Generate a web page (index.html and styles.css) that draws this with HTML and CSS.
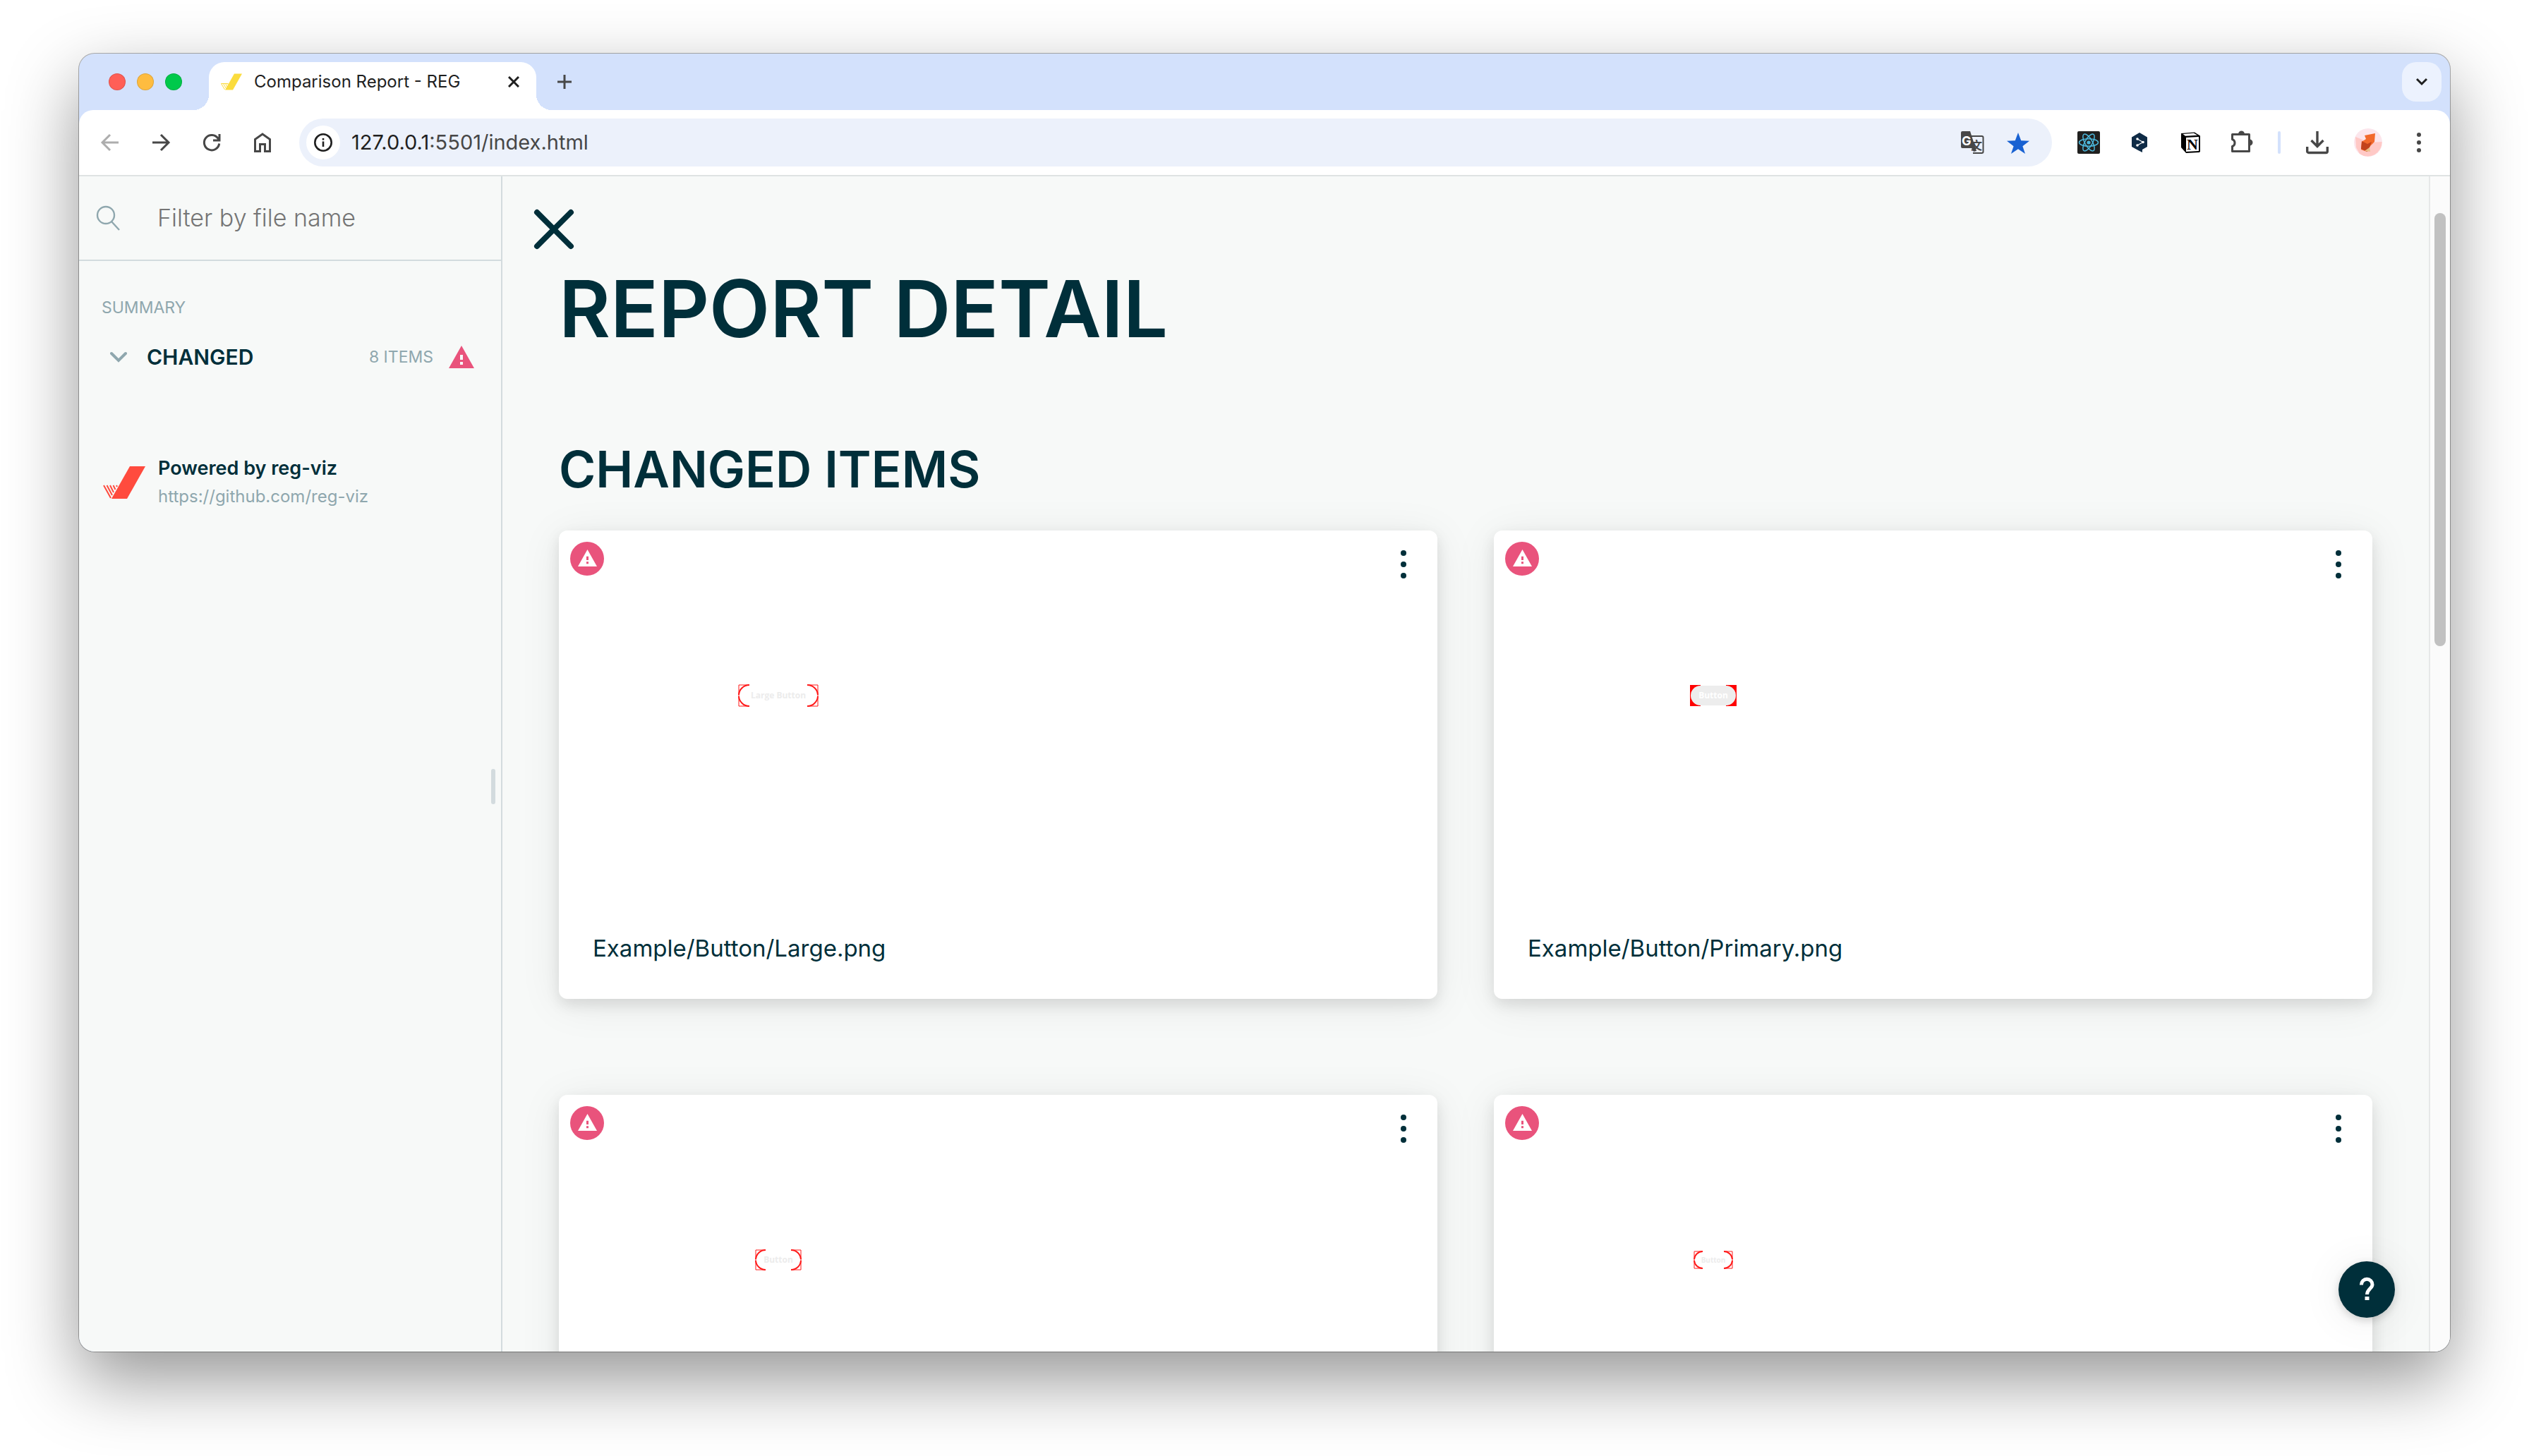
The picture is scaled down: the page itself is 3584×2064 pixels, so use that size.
FILE: index.html
```html
<!DOCTYPE html>
<html lang="en">
<head>
<meta charset="utf-8">
<title>Comparison Report - REG</title>
<link rel="stylesheet" href="styles.css">
</head>
<body>
<svg class="defs" aria-hidden="true">
  <symbol id="warning" viewBox="0 0 36 32"><path fill-rule="evenodd" d="M18 0 36 32H0ZM16 13v7h4v-7ZM16 23v4h4v-4Z"/></symbol>
  <symbol id="kebab" viewBox="0 0 12 42"><circle cx="6" cy="5" r="4"/><circle cx="6" cy="21" r="4"/><circle cx="6" cy="37" r="4"/></symbol>
</svg>
<div class="window">
  <header class="tabstrip">
    <div class="lights">
      <span class="light light-close"></span><span class="light light-min"></span><span class="light light-max"></span>
    </div>
    <div class="tab">
      <svg class="favicon" viewBox="0 0 60 48"><path fill="#fbdc3d" d="M38 1h22L34 47H12Z"/><path fill="none" stroke="#fbdc3d" stroke-width="2" d="M1 29l10 17M7 29l8 14M13 29l5 9M19 29l2 4M1 29h20"/></svg>
      <span class="tab-title">Comparison Report - REG</span>
      <button class="plain" aria-label="Close tab"><svg width="16" height="16" viewBox="0 0 16 16"><path d="M1 1l14 14M15 1L1 15" stroke="#1f1f1f" stroke-width="3"/></svg></button>
    </div>
    <button class="plain new-tab" aria-label="New tab"><svg width="20" height="20" viewBox="0 0 20 20"><path d="M10 0v20M0 10h20" stroke="#474747" stroke-width="3"/></svg></button>
    <button class="tab-search" aria-label="Search tabs"><svg width="16" height="12" viewBox="0 0 16 12"><path d="M1 2l7 7 7-7" fill="none" stroke="#1f1f1f" stroke-width="3"/></svg></button>
  </header>
  <nav class="toolbar">
    <button class="tool" aria-label="Back"><svg viewBox="0 0 36 36"><path class="line muted" d="M30 18H8M18 7L7 18l11 11"/></svg></button>
    <button class="tool" aria-label="Forward"><svg viewBox="0 0 36 36"><path class="line" d="M6 18h22M18 7l11 11-11 11"/></svg></button>
    <button class="tool" aria-label="Reload"><svg viewBox="0 0 36 36"><path class="line" d="M28.700 19.500A10.700 10.700 0 1 1 27 12.200L28 14M29 6v9h-9"/></svg></button>
    <button class="tool" aria-label="Home"><svg viewBox="0 0 36 36"><path class="line" d="M7.500 30.500V13.500L18 6l10.500 7.500v17h-7V20.500h-7v10Z"/></svg></button>
    <div class="omnibox">
      <button class="site-info" aria-label="Site information"><svg width="28" height="28" viewBox="0 0 28 28"><circle cx="14" cy="14" r="11.700" fill="none" stroke="#1f1f1f" stroke-width="2.600"/><path d="M14 12.500v7.500M14 8v2.600" stroke="#1f1f1f" stroke-width="2.600"/></svg></button>
      <div class="url"><span class="host">127.0.0.1</span>:5501/index.html</div>
      <button class="mark" aria-label="Translate"><svg viewBox="0 0 36 36"><path d="M14 9h16.500a2 2 0 0 1 2 2v20a2 2 0 0 1-2 2H18" fill="none" stroke="#474747" stroke-width="2"/><text class="cjk" x="15" y="28">文</text><path fill="#474747" d="M3 2h11l9 28-4 1-3-5H3a2 2 0 0 1-2-2V4a2 2 0 0 1 2-2Z"/><text class="gee" x="2" y="22">G</text></svg></button>
      <button class="mark" aria-label="Bookmark"><svg viewBox="0 0 36 36"><path fill="#1861d2" d="M18 4l4.200 11.200L34 15.700l-9.600 7.600L28 34l-10-6.800L8 34l3.600-10.700L2 15.700l11.800-.5Z"/></svg></button>
    </div>
    <button class="tool" aria-label="React Developer Tools"><svg viewBox="0 0 36 36"><rect x="2" y="2" width="32" height="32" rx="2" fill="#20201f"/><g fill="none" stroke="#4cb8dc" stroke-width="1.500"><ellipse cx="18" cy="18" rx="13.500" ry="5.200"/><ellipse cx="18" cy="18" rx="13.500" ry="5.200" transform="rotate(60 18 18)"/><ellipse cx="18" cy="18" rx="13.500" ry="5.200" transform="rotate(120 18 18)"/></g><circle cx="18" cy="18" r="2.600" fill="#4cb8dc"/></svg></button>
    <button class="tool" aria-label="DeepL"><svg viewBox="0 0 36 36"><path fill="#0f2b46" d="M18 4l11 6.500v13.500l-7 4v4l-6-3-9-5V10.500Z"/><path d="M15 13l8 4.500-8 4.500" fill="none" stroke="#fff" stroke-width="1.200"/><g fill="#fff"><circle cx="15" cy="13" r="1.800"/><circle cx="23" cy="17.500" r="1.800"/><circle cx="15" cy="22" r="1.800"/></g></svg></button>
    <button class="tool" aria-label="Notion"><svg viewBox="0 0 36 36"><path d="M5 5l19-1.500 8 5v22l-1 1.500-19 1-7-8Z"/><path fill="#fff" d="M7.500 6l15.500-1.200 5 3-17 1ZM12 11l18-1v20l-18 1Z"/><text class="notion" x="13" y="28">N</text></svg></button>
    <button class="tool" aria-label="Extensions"><svg viewBox="0 0 36 36"><path fill="none" stroke="#474747" stroke-width="3" stroke-linejoin="round" d="M5.500 6.500h24v24h-24v-7a5.300 5.300 0 0 0 0-10Z"/><path fill="#474747" d="M14 6a4.500 4.500 0 0 1 9 0ZM30 13.500a4.500 4.500 0 0 1 0 9Z"/></svg></button>
    <span class="tool-divider"></span>
    <button class="tool" aria-label="Downloads"><svg viewBox="0 0 36 36"><path fill="none" stroke="#474747" stroke-width="3.400" d="M18 2v21M9.500 15l8.500 8.500 8.500-8.500M3.700 24v6.500a2 2 0 0 0 2 2h24.600a2 2 0 0 0 2-2V24"/></svg></button>
    <button class="tool" aria-label="Profile"><svg class="avatar" viewBox="0 0 40 40"><circle cx="20" cy="20" r="20" fill="#fce6ec"/><path fill="#ffc9c6" d="M2 12l20 8 17.500-1A20 20 0 0 1 8 36L3 27Z"/><path fill="#f26a2c" d="M15 10l15-3-1 12-6 6-5 8-8-3 1-11 6-4Z"/><path fill="#c2431c" d="M11 18l8 4 6-3-3 8-3 6-9-4Z"/><path fill="#e8c08a" d="M15 32l7-5 1 6Z"/></svg></button>
    <button class="tool" aria-label="Menu"><svg viewBox="0 0 36 36" fill="#474747"><circle cx="18" cy="7" r="3"/><circle cx="18" cy="18" r="3"/><circle cx="18" cy="29" r="3"/></svg></button>
  </nav>
  <div class="page">
    <aside class="sidebar">
      <label class="filter">
        <svg width="36" height="36" viewBox="0 0 36 36"><g fill="none" stroke="#8fa7ae" stroke-width="2.400"><circle cx="15" cy="14" r="12"/><path d="M23 23l11 12"/></g></svg>
        <input type="text" placeholder="Filter by file name" aria-label="Filter by file name">
      </label>
      <p class="summary-title">SUMMARY</p>
      <button class="group">
        <svg width="24" height="16" viewBox="0 0 24 16"><path d="M2 3l10 10L22 3" fill="none" stroke="#8fa7ae" stroke-width="4" stroke-linecap="round"/></svg>
        <span class="group-name">CHANGED</span>
        <span class="group-count">8 ITEMS</span>
        <svg class="pink" width="36" height="32"><use href="#warning"/></svg>
      </button>
      <a class="powered" href="https://github.com/reg-viz">
        <svg width="60" height="48" viewBox="0 0 60 48"><path fill="#ff4b3e" d="M38 1h22L34 47H12Z"/><path fill="none" stroke="#ff4b3e" stroke-width="2" d="M1 28l10 18M5.500 28l7.500 14M10 28l5 10M14.500 28l3 6M19 28l1 2"/></svg>
        <span class="powered-text"><strong>Powered by reg-viz</strong><span>https://github.com/reg-viz</span></span>
      </a>
      <span class="resizer"></span>
    </aside>
    <main class="content">
      <button class="plain close" aria-label="Close menu"><svg width="58" height="58" viewBox="0 0 58 58"><path d="M5 5l48 48M53 5L5 53" stroke="#002f3a" stroke-width="8" stroke-linecap="round"/></svg></button>
      <h1>REPORT DETAIL</h1>
      <h2>CHANGED ITEMS</h2>
      <div class="cards">
        <article class="card">
          <span class="badge"><svg width="27" height="24"><use href="#warning"/></svg></span>
          <button class="plain card-menu" aria-label="Card menu"><svg width="12" height="42"><use href="#kebab"/></svg></button>
          <div class="preview"><svg width="114" height="32" viewBox="0 0 114 32"><path class="frame" d="M16 1H1v30h15M98 1h15v30H98"/><path class="diff" d="M16 1A15 15 0 0 0 1 15M1 17A15 15 0 0 0 16 31M98 1a15 15 0 0 1 15 14M113 17a15 15 0 0 1-15 14"/><text x="57" y="20">Large Button</text></svg></div>
          <p class="name">Example/Button/Large.png</p>
        </article>
        <article class="card">
          <span class="badge"><svg width="27" height="24"><use href="#warning"/></svg></span>
          <button class="plain card-menu" aria-label="Card menu"><svg width="12" height="42"><use href="#kebab"/></svg></button>
          <div class="preview"><svg width="66" height="30" viewBox="0 0 66 30"><path fill="#f00" d="M0 0h66v30H0Z"/><path fill="#fff" d="M15 0h36v30H15Z"/><rect x="1" y="1" width="64" height="28" rx="14" fill="#ededed"/><text class="light-text" x="33" y="19">Button</text></svg></div>
          <p class="name">Example/Button/Primary.png</p>
        </article>
        <article class="card">
          <span class="badge"><svg width="27" height="24"><use href="#warning"/></svg></span>
          <button class="plain card-menu" aria-label="Card menu"><svg width="12" height="42"><use href="#kebab"/></svg></button>
          <div class="preview"><svg width="66" height="30" viewBox="0 0 66 30"><path class="frame" d="M15 1H1v28h14M51 1h14v28H51"/><path class="diff" d="M15 1A14 14 0 0 0 1 14M1 16A14 14 0 0 0 15 29M51 1a14 14 0 0 1 14 13M65 16a14 14 0 0 1-14 13"/><text x="33" y="19">Button</text></svg></div>
        </article>
        <article class="card">
          <span class="badge"><svg width="27" height="24"><use href="#warning"/></svg></span>
          <button class="plain card-menu" aria-label="Card menu"><svg width="12" height="42"><use href="#kebab"/></svg></button>
          <div class="preview"><svg width="56" height="26" viewBox="0 0 56 26"><path class="frame" d="M13 1H1v24h12M43 1h12v24H43"/><path class="diff" d="M13 1A12 12 0 0 0 1 12M1 14A12 12 0 0 0 13 25M43 1a12 12 0 0 1 12 11M55 14a12 12 0 0 1-12 11"/><text class="small-text" x="28" y="17">Button</text></svg></div>
        </article>
      </div>
    </main>
    <div class="scrollbar"><span class="thumb"></span></div>
    <button class="help" aria-label="Help"><svg width="24" height="36" viewBox="0 0 24 36"><path d="M4.500 11.500V11a7.500 7.500 0 0 1 15.500 0c0 5.500-7.500 6.500-7.500 14" fill="none" stroke="#fff" stroke-width="5"/><path fill="#fff" d="M9.500 28h6v5h-6Z"/></svg></button>
  </div>
</div>
</body>
</html>
```
FILE: styles.css
```css
* { box-sizing: border-box; }

body {
  margin: 0;
  height: 100vh;
  padding: 76px 112px 148px;
  background: #fff;
  color: #002f3a;
  font-family: Inter, "Liberation Sans", sans-serif;
}

button { border: 0; padding: 0; margin: 0; background: none; font: inherit; color: inherit; }
svg { display: block; flex: none; }
p, h1, h2 { margin: 0; }
a { color: inherit; text-decoration: none; }
.defs { position: absolute; width: 0; height: 0; }
.plain { display: flex; }

/* Browser window */
.window {
  display: flex;
  flex-direction: column;
  height: 100%;
  border-radius: 22px;
  overflow: hidden;
  background: #d3e1fc;
  box-shadow: 0 0 0 1px rgba(0, 0, 0, .3), 0 40px 100px rgba(0, 0, 0, .42);
}

.tabstrip {
  display: flex;
  align-items: center;
  height: 80px;
  padding: 0 12px 0 42px;
}
.lights { display: flex; gap: 16px; width: 142px; }
.light { width: 24px; height: 24px; border-radius: 50%; border: 1px solid rgba(0, 0, 0, .12); }
.light-close { background: #ff5f57; }
.light-min { background: #febc40; }
.light-max { background: #00c94b; }

.tab {
  position: relative;
  display: flex;
  align-items: center;
  align-self: flex-end;
  width: 464px;
  height: 68px;
  padding: 0 24px 12px 17px;
  border-radius: 22px 22px 0 0;
  background: #fff;
}
.tab::before, .tab::after {
  content: "";
  position: absolute;
  bottom: 0;
  width: 22px;
  height: 22px;
  background: radial-gradient(circle at 0 0, transparent 22px, #fff 22px);
}
.tab::before { right: 100%; }
.tab::after { left: 100%; transform: scaleX(-1); }
.favicon { width: 30px; height: 24px; }
.tab-title { flex: 1; padding-left: 17px; font-size: 24px; line-height: 32px; color: #1f1f1f; }
.new-tab { margin-left: 30px; }
.tab-search {
  display: grid;
  place-items: center;
  width: 56px;
  height: 56px;
  margin-left: auto;
  border-radius: 20px;
  background: #ecf2fe;
}

.toolbar {
  display: flex;
  align-items: center;
  height: 94px;
  padding: 0 8px;
  border-bottom: 2px solid #dfe3e3;
  border-radius: 20px 20px 0 0;
  background: #fff;
}
.tool { display: grid; place-items: center; width: 72px; height: 72px; flex: none; }
.tool svg { width: 36px; height: 36px; }
.tool .avatar { width: 40px; height: 40px; }
.line { fill: none; stroke: #474747; stroke-width: 3; }
.muted { stroke: #adadad; }
.omnibox {
  display: flex;
  align-items: center;
  flex: 1;
  height: 68px;
  margin: 0 16px;
  padding: 0 16px 0 10px;
  border-radius: 34px;
  background: #ecf1fb;
}
.site-info { display: grid; place-items: center; width: 48px; height: 48px; border-radius: 50%; background: #fff; }
.url { flex: 1; padding-left: 16px; font-size: 29px; line-height: 36px; color: #474747; }
.host { color: #1f1f1f; }
.mark { display: grid; place-items: center; width: 64px; height: 64px; }
.mark svg { width: 36px; height: 36px; }
.cjk { font: 700 16px "Noto Sans CJK SC", sans-serif; fill: #474747; }
.gee { font: 700 18px Inter, sans-serif; fill: #fff; }
.notion { font: 700 22px "Liberation Serif", serif; }
.tool-divider { width: 4px; height: 32px; margin: 0 16px; border-radius: 2px; background: #d3e1fc; }

/* Report page */
.page { position: relative; display: flex; flex: 1; min-height: 0; background: #f7f9f8; }

.sidebar { position: relative; flex: none; width: 600px; border-right: 2px solid #d3dbde; }
.filter {
  display: flex;
  align-items: center;
  gap: 52px;
  height: 120px;
  padding-left: 23px;
  border-bottom: 2px solid #d3dbde;
}
.filter input {
  flex: 1;
  min-width: 0;
  padding: 0;
  border: 0;
  outline: 0;
  background: none;
  font: 300 34px/40px Inter, sans-serif;
  color: #002f3a;
}
.filter input::placeholder { color: #757575; opacity: 1; }
.summary-title { padding: 50px 32px 0; font-size: 23px; line-height: 32px; color: #8fa7ae; }
.group {
  display: flex;
  align-items: center;
  width: 100%;
  height: 48px;
  margin-top: 30px;
  padding: 0 38px 0 44px;
}
.group-name { padding-left: 28px; font-size: 30px; font-weight: 600; line-height: 36px; }
.group-count { margin-left: auto; padding-right: 22px; font-size: 23px; line-height: 32px; color: #8fa7ae; }
.pink { fill: #e9537c; }
.powered { display: flex; align-items: center; gap: 18px; margin-top: 116px; padding-left: 34px; }
.powered-text { display: flex; flex-direction: column; gap: 4px; font-size: 24px; line-height: 36px; color: #8fa7ae; }
.powered-text strong { font-size: 27px; font-weight: 600; color: #002f3a; }
.resizer { position: absolute; top: 840px; right: 8px; width: 6px; height: 50px; border-radius: 3px; background: #d3dbde; }

.content { flex: 1; min-width: 0; overflow: hidden; padding: 46px 80px 0; }
.close { margin-left: -36px; }
h1 { margin-top: 31px; font-size: 112px; font-weight: 600; line-height: 104px; }
h2 { margin: 144px 0 55px; font-size: 71px; font-weight: 600; line-height: 64px; }
.cards { display: grid; grid-template-columns: 1fr 1fr; gap: 136px 80px; }
.card {
  position: relative;
  height: 664px;
  border-radius: 12px;
  background: #fff;
  box-shadow: 0 8px 20px rgba(0, 0, 0, .1), 0 8px 60px rgba(0, 0, 0, .08);
}
.badge {
  position: absolute;
  top: 16px;
  left: 16px;
  display: flex;
  justify-content: center;
  width: 48px;
  height: 48px;
  padding-top: 11px;
  border-radius: 50%;
  background: #e9537c;
}
.badge svg { fill: #fff; }
.card-menu { position: absolute; top: 27px; right: 42px; }
.card-menu svg { fill: #002f3a; }
.preview { display: grid; place-items: center; width: 50%; height: 468px; }
.preview text { font: 700 12px "Open Sans", sans-serif; text-anchor: middle; fill: #ececec; }
.preview .light-text { fill: #fff; }
.preview .small-text { font-size: 10px; }
.frame { fill: none; stroke: #ff1a1a; stroke-width: 1px; }
.diff { fill: none; stroke: #ff1a1a; stroke-width: 2px; }
.name { margin-top: 104px; padding: 0 48px; font-size: 33px; line-height: 40px; }

.scrollbar { flex: none; width: 30px; padding: 52px 6px 0; border-left: 2px solid #e6e8e8; background: #fbfbfb; }
.thumb { display: block; width: 16px; height: 614px; border-radius: 8px; background: #c1c1c1; }
.help {
  position: absolute;
  right: 78px;
  bottom: 48px;
  display: grid;
  place-items: center;
  width: 80px;
  height: 80px;
  border-radius: 50%;
  background: #002f3a;
  box-shadow: 0 4px 12px rgba(0, 0, 0, .16), 0 4px 60px rgba(0, 0, 0, .08);
}
```
